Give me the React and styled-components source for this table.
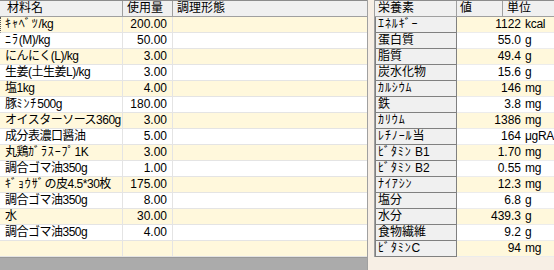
import React from 'react';
import styled, { createGlobalStyle } from 'styled-components';

const GlobalStyle = createGlobalStyle`
  html, body {
    margin: 0;
    padding: 0;
    background: #f7efe5;
    overflow: hidden;
  }
  * {
    box-sizing: border-box;
  }
`;

const YELLOW = '#fff8dc';

const materials = [
  ['ｷｬﾍﾞﾂ/kg', '200.00'],
  ['ﾆﾗ(M)/kg', '50.00'],
  ['にんにく(L)/kg', '3.00'],
  ['生姜(土生姜L)/kg', '3.00'],
  ['塩1kg', '4.00'],
  ['豚ﾐﾝﾁ500g', '180.00'],
  ['オイスターソース360g', '3.00'],
  ['成分表濃口醤油', '5.00'],
  ['丸鶏ｶﾞﾗｽｰﾌﾟ1K', '3.00'],
  ['調合ゴマ油350g', '1.00'],
  ['ｷﾞｮｳｻﾞの皮4.5*30枚', '175.00'],
  ['調合ゴマ油350g', '8.00'],
  ['水', '30.00'],
  ['調合ゴマ油350g', '4.00'],
  ['', ''],
];

const nutrients = [
  ['ｴﾈﾙｷﾞｰ', '1122', 'kcal'],
  ['蛋白質', '55.0', 'g'],
  ['脂質', '49.4', 'g'],
  ['炭水化物', '15.6', 'g'],
  ['ｶﾙｼｳﾑ', '146', 'mg'],
  ['鉄', '3.8', 'mg'],
  ['ｶﾘｳﾑ', '1386', 'mg'],
  ['ﾚﾁﾉｰﾙ当', '164', 'μgRA'],
  ['ﾋﾞﾀﾐﾝ B1', '1.70', 'mg'],
  ['ﾋﾞﾀﾐﾝ B2', '0.55', 'mg'],
  ['ﾅｲｱｼﾝ', '12.3', 'mg'],
  ['塩分', '6.8', 'g'],
  ['水分', '439.3', 'g'],
  ['食物繊維', '9.2', 'g'],
  ['ﾋﾞﾀﾐﾝC', '94', 'mg'],
];

const Screen = styled.div`
  width: 554px;
  height: 270px;
  display: flex;
  font-family: 'Liberation Sans', 'Noto Sans CJK JP', sans-serif;
  font-size: 12px;
  color: #000;
  background: #f7efe5;
`;

const Kana = styled.span`
  letter-spacing: 0.9px;
`;

const withKana = (text) =>
  text.split(/([\uFF61-\uFF9F]+)/).map((part, i) =>
    /[\uFF61-\uFF9F]/.test(part) ? <Kana key={i}>{part}</Kana> : part
  );

/* left: recipe grid */
const RecipePanel = styled.div`
  width: 368px;
  display: flex;
  flex-direction: column;
  border-right: 1px solid #a0a0a0;
`;

const RecipeRow = styled.div`
  display: grid;
  grid-template-columns: 123px 50px 1fr;
  height: ${({ header }) => (header ? '17px' : '16px')};
  background: ${({ header, odd }) => (header ? '#f0f0f0' : odd ? YELLOW : '#fff')};
  border-top: ${({ header }) => (header ? '1px solid #8c8c8c' : 'none')};
`;

const RecipeCell = styled.div`
  border-right: 1px solid ${({ header }) => (header ? '#a0a0a0' : '#e4e4e4')};
  border-bottom: 1px solid ${({ header }) => (header ? '#a0a0a0' : '#e4e4e4')};
  border-left: ${({ focus }) => (focus ? '1px dotted #555' : 'none')};
  padding: ${({ right }) => (right ? '0 5px 0 0' : '0 0 0 4px')};
  text-align: ${({ right }) => (right ? 'right' : 'left')};
  line-height: 15px;
  white-space: nowrap;
  overflow: hidden;

  &:first-child {
    padding-left: ${({ header, focus }) => (header ? '7px' : focus ? '4px' : '5px')};
    letter-spacing: ${({ header }) => (header ? '0' : '-0.5px')};
  }
  &:last-child {
    border-right: none;
  }
`;

const GrayFill = styled.div`
  flex: 1;
  background: #ababab;
  border-top: 1px solid #9a9a9a;
`;

const Gap = styled.div`
  width: 6px;
`;

/* right: nutrients grid */
const NutrientPanel = styled.div`
  flex: 1;
  display: flex;
  flex-direction: column;
`;

const NutrientGrid = styled.div`
  border-left: 1px solid #a0a0a0;
`;

const NutrientRow = styled.div`
  display: grid;
  grid-template-columns: ${({ header }) => (header ? '82px 46px 1fr' : '82px 65px 1fr')};
  height: ${({ header }) => (header ? '17px' : '16px')};
  background: ${({ header, odd }) => (header ? '#f0f0f0' : odd ? YELLOW : '#fff')};
  border-top: ${({ header }) => (header ? '1px solid #8c8c8c' : 'none')};
`;

const LabelCell = styled.div`
  background: #f0f0f0;
  border-right: 1px solid #808080;
  border-bottom: 1px solid #808080;
  border-left: 1px solid #808080;
  padding-left: 2px;
  line-height: 15px;
  white-space: nowrap;
  overflow: hidden;
`;

const HeadCell = styled.div`
  border-right: 1px solid #a0a0a0;
  border-bottom: 1px solid #a0a0a0;
  padding-left: ${({ pad }) => pad}px;
  line-height: 15px;
  white-space: nowrap;

  &:last-child {
    border-right: none;
  }
`;

const ValueCell = styled.div`
  border-bottom: 1px solid #ececec;
  text-align: ${({ right }) => (right ? 'right' : 'left')};
  padding: ${({ right }) => (right ? '0 1px 0 0' : '0 0 0 3px')};
  line-height: 15px;
  white-space: nowrap;
  overflow: hidden;
  letter-spacing: ${({ right }) => (right ? '0' : '-0.3px')};
`;

const BeigeFill = styled.div`
  flex: 1;
`;

const App = () => (
  <Screen>
    <GlobalStyle />
    <RecipePanel>
      <RecipeRow header>
        <RecipeCell header>材料名</RecipeCell>
        <RecipeCell header>使用量</RecipeCell>
        <RecipeCell header>調理形態</RecipeCell>
      </RecipeRow>
      {materials.map(([name, qty], i) => (
        <RecipeRow key={i} odd={i % 2 === 0}>
          <RecipeCell focus={i === 0}>{withKana(name)}</RecipeCell>
          <RecipeCell right>{qty}</RecipeCell>
          <RecipeCell />
        </RecipeRow>
      ))}
      <GrayFill />
    </RecipePanel>
    <Gap />
    <NutrientPanel>
      <NutrientGrid>
        <NutrientRow header>
          <HeadCell pad={3}>栄養素</HeadCell>
          <HeadCell pad={3}>値</HeadCell>
          <HeadCell pad={4}>単位</HeadCell>
        </NutrientRow>
        {nutrients.map(([label, value, unit], i) => (
          <NutrientRow key={label} odd={i % 2 === 0}>
            <LabelCell>{withKana(label)}</LabelCell>
            <ValueCell right>{value}</ValueCell>
            <ValueCell>{unit}</ValueCell>
          </NutrientRow>
        ))}
      </NutrientGrid>
      <BeigeFill />
    </NutrientPanel>
  </Screen>
);

export default App;
